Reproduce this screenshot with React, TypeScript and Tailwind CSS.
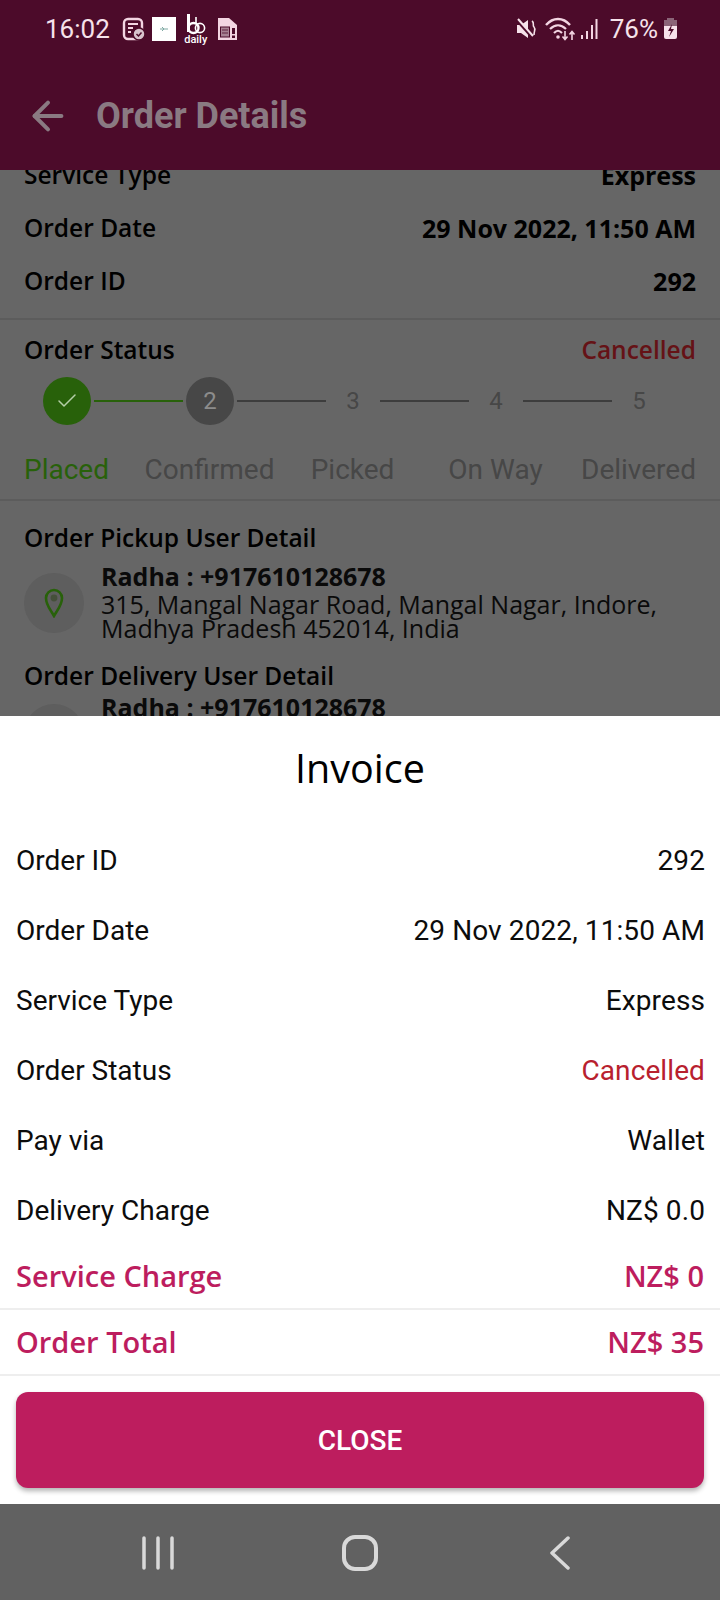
import { ArrowLeft, Check } from 'lucide-react'

const roboto = 'font-["Roboto",sans-serif]'
const openSans = 'font-["Open_Sans",sans-serif]'

const invoiceRows = [
  { label: 'Order ID', value: '292' },
  { label: 'Order Date', value: '29 Nov 2022, 11:50 AM' },
  { label: 'Service Type', value: 'Express' },
  { label: 'Order Status', value: 'Cancelled', danger: true },
  { label: 'Pay via', value: 'Wallet' },
  { label: 'Delivery Charge', value: 'NZ$ 0.0' },
]

const stepLabels = ['Placed', 'Confirmed', 'Picked', 'On Way', 'Delivered']

function StatusIcons() {
  return (
    <div className="flex items-center">
      {/* task note */}
      <svg width="24" height="24" viewBox="0 0 24 24" fill="none" className="ml-[12px]">
        <rect x="2" y="2" width="18" height="20" rx="4" stroke="#f3d5e2" strokeWidth="2.4" />
        <path d="M6 7h10M6 11h5M6 15h3" stroke="#f3d5e2" strokeWidth="2" />
        <circle cx="17" cy="17" r="6" fill="#d8c3cc" stroke="#4c0b2a" strokeWidth="1.5" />
        <path d="M14.5 17l2 2 3-3.5" stroke="#4c0b2a" strokeWidth="1.5" />
      </svg>
      {/* white square notification */}
      <div className="ml-[6px] flex h-6 w-6 items-center justify-center bg-white">
        <svg width="10" height="6" viewBox="0 0 10 6" fill="none">
          <path d="M1 3h8M3 1l2 2-2 2" stroke="#7ea9a3" strokeWidth="1" />
        </svg>
      </div>
      {/* bb daily */}
      <div className="ml-[8px] flex w-6 flex-col items-center">
        <svg width="21" height="22" viewBox="0 0 21 22" fill="none" stroke="#ffffff">
          <path d="M3.5 0v18" strokeWidth="3" />
          <circle cx="8.5" cy="14" r="5" strokeWidth="2.4" />
          <path d="M11 3v7" strokeWidth="1.6" />
          <circle cx="15" cy="14" r="4.6" strokeWidth="1.6" />
        </svg>
        <span className={`${roboto} -mt-[2px] text-[11px] leading-[11px] font-medium text-white`}>daily</span>
      </div>
      {/* sim */}
      <svg width="21" height="24" viewBox="0 0 21 24" fill="none" className="ml-[9px]">
        <path d="M1 1h11l8 7v15H1z" fill="#f3d5e2" />
        <rect x="3.5" y="10" width="9" height="10" fill="#a88294" stroke="#4c0b2a" strokeWidth="1" />
        <path d="M5 13h6M5 16h6" stroke="#4c0b2a" strokeWidth="0.8" />
        <rect x="15" y="11" width="3" height="6" fill="#4c0b2a" />
        <rect x="15" y="18.5" width="3" height="2.5" fill="#4c0b2a" />
      </svg>
    </div>
  )
}

function SystemIcons() {
  return (
    <div className="flex items-center">
      {/* muted speaker */}
      <svg width="22" height="22" viewBox="0 0 22 22" fill="none">
        <path d="M1 7h4l7-5v18l-7-5H1z" fill="#f6e2ea" />
        <path d="M1 2l15 17" stroke="#4c0b2a" strokeWidth="3" />
        <path d="M2 1l15 17" stroke="#f6e2ea" strokeWidth="2" />
        <path d="M16 3c3 2 0 4 2 6s0 4 0 8" stroke="#f6e2ea" strokeWidth="1.6" />
      </svg>
      {/* wifi with arrows */}
      <svg width="32" height="24" viewBox="0 0 32 24" fill="none" stroke="#f3d5e2" className="ml-[7px]">
        <path d="M1 8c7-8 17-8 24 0" strokeWidth="2.4" />
        <path d="M5 12c5-5 11-5 16 0" strokeWidth="2.2" />
        <path d="M9 16c3-3 5-3 8 0" strokeWidth="2.2" />
        <circle cx="13" cy="20" r="1.8" fill="#f3d5e2" stroke="none" />
        <path d="M20 14v8M17.5 19.5l2.5 3 2.5-3" strokeWidth="1.6" />
        <path d="M27 23v-8M24.5 17.5l2.5-3 2.5 3" strokeWidth="1.6" />
      </svg>
      {/* signal */}
      <svg width="18" height="22" viewBox="0 0 18 22" fill="#f3d5e2" className="ml-[3px]">
        <rect x="1" y="17" width="2" height="4" />
        <rect x="6" y="13" width="2" height="8" />
        <rect x="11" y="7" width="2" height="14" />
        <rect x="15.5" y="1" width="2" height="20" />
      </svg>
      <span className={`${roboto} ml-[12px] text-[26px] leading-[30px] text-[#f6e2ea]`}>76%</span>
      {/* charging battery */}
      <svg width="15" height="24" viewBox="0 0 15 24" fill="none" className="ml-[5px]">
        <rect x="4" y="1" width="7" height="3" fill="#8a6477" />
        <rect x="1" y="3" width="13" height="6" fill="#8a6477" />
        <path d="M1 9h13v11a2 2 0 0 1-2 2H3a2 2 0 0 1-2-2z" fill="#f6e2ea" />
        <path d="M9 7l-4 7h3l-2 6 5-8H8z" fill="#4c0b2a" />
      </svg>
    </div>
  )
}

function InfoRow({ label, value, danger }: { label: string; value: string; danger?: boolean }) {
  return (
    <div className="flex items-center justify-between">
      <span className={`${openSans} text-[24.5px] leading-[34px] font-semibold text-black`}>{label}</span>
      <span
        className={`${openSans} leading-[34px] ${danger ? 'text-[24.5px] font-semibold text-[#651216]' : 'text-[25px] font-bold text-black'}`}
      >
        {value}
      </span>
    </div>
  )
}

function Stepper() {
  return (
    <div className="ml-[43px] flex items-center">
      <div className="flex h-12 w-12 items-center justify-center rounded-full bg-[#28610a]">
        <Check size={24} strokeWidth={1.5} className="text-[#b5cfa8]" />
      </div>
      <div className="mx-[3px] h-[2px] w-[89px] bg-[#28610a]" />
      <div className={`${roboto} flex h-12 w-12 items-center justify-center rounded-full bg-[#474747] text-[24px] text-[#8c8c8c]`}>2</div>
      {['3', '4', '5'].map((n) => (
        <div key={n} className="flex items-center">
          <div className="mx-[3px] h-[2px] w-[89px] bg-[#3d3d3d]" />
          <div className={`${roboto} flex h-12 w-12 items-center justify-center text-[24px] text-[#474747]`}>{n}</div>
        </div>
      ))}
    </div>
  )
}

function UserDetail({ title, first }: { title: string; first?: boolean }) {
  return (
    <div>
      <div className={`${openSans} text-[24.5px] leading-[34px] font-semibold text-black ${first ? 'mb-[5px]' : '-mb-[2px]'}`}>{title}</div>
      <div className="flex items-center gap-[17px]">
        <div className="mt-[6px] flex h-[60px] w-[60px] shrink-0 items-center justify-center rounded-full bg-[#5e5e5e]">
          <svg width="22" height="30" viewBox="0 0 20 30" fill="none" stroke="#28610a" strokeWidth="2.6">
            <path d="M10 28C6 21 2 17 2 10a8 8 0 0 1 16 0c0 7-4 11-8 18z" />
            <circle cx="10" cy="10" r="3.4" fill="#45503a" stroke="none" />
          </svg>
        </div>
        <div>
          <div className={`${openSans} text-[25px] leading-[32px] font-bold text-[#0a0a0a]`}>Radha : +917610128678</div>
          <div className={`${openSans} text-[25px] leading-[24px] text-[#0a0a0a]`}>
            315, Mangal Nagar Road, Mangal Nagar, Indore,
            <br />
            Madhya Pradesh 452014, India
          </div>
        </div>
      </div>
    </div>
  )
}

export default function App() {
  return (
    <div className="flex h-[1600px] w-[720px] flex-col overflow-hidden bg-[#666666]">
      <header className="h-[170px] shrink-0 bg-[#4c0b2a]">
        <div className="flex h-[58px] items-center justify-between pr-[42px] pl-[45px]">
          <div className="flex items-center">
            <span className={`${roboto} text-[26px] leading-[30px] text-[#f6e2ea]`}>16:02</span>
            <StatusIcons />
          </div>
          <SystemIcons />
        </div>
        <div className="mt-[35px] flex items-center pl-[25px]">
          <ArrowLeft size={46} strokeWidth={2.1} className="text-[#8a7a82]" />
          <span className={`${roboto} ml-[25px] text-[36px] leading-[46px] font-bold text-[#8a7a82]`}>Order Details</span>
        </div>
      </header>

      {/* page behind the dim, scrolled a little */}
      <main className="h-[546px] shrink-0 overflow-hidden">
        <div className="-mt-[12px] px-[24px]">
          <div className="flex flex-col gap-[19px]">
            <InfoRow label="Service Type" value="Express" />
            <InfoRow label="Order Date" value="29 Nov 2022, 11:50 AM" />
            <InfoRow label="Order ID" value="292" />
          </div>
        </div>
        <div className="mt-[20px] border-t-2 border-[#5c5c5c] pt-[13px]">
          <div className="px-[24px]">
            <InfoRow label="Order Status" value="Cancelled" danger />
          </div>
          <div className="mt-[10px]">
            <Stepper />
          </div>
          <div className={`-ml-[5px] mt-[27px] grid w-[715px] grid-cols-5 text-center ${roboto} text-[28px] leading-[36px] text-[#474747]`}>
            {stepLabels.map((label, i) => (
              <span key={label} className={i === 0 ? 'text-[#28610a]' : ''}>
                {label}
              </span>
            ))}
          </div>
        </div>
        <div className="mt-[11px] flex flex-col gap-[19px] border-t-2 border-[#5c5c5c] px-[24px] pt-[20px]">
          <UserDetail title="Order Pickup User Detail" first />
          <UserDetail title="Order Delivery User Detail" />
        </div>
      </main>

      {/* invoice sheet */}
      <section className="h-[788px] shrink-0 bg-white">
        <h2 className={`${openSans} pt-[26px] text-center text-[39.5px] leading-[52px] font-medium text-black`}>Invoice</h2>
        <div className="mt-[32px] flex flex-col pr-[15px] pl-4">
          {invoiceRows.map((row) => (
            <div key={row.label} className={`${roboto} flex h-[70px] items-center justify-between text-[28px] text-[#0c0c0c]`}>
              <span>{row.label}</span>
              <span className={`tracking-[0.1px] ${row.danger ? 'text-[#b8202e]' : ''}`}>{row.value}</span>
            </div>
          ))}
        </div>
        <div className={`${openSans} text-[29px] font-semibold text-[#bd1d5e]`}>
          <div className="flex h-[64px] items-center justify-between border-b-2 border-[#eeeeee] px-4 pb-[3px]">
            <span>Service Charge</span>
            <span>NZ$ 0</span>
          </div>
          <div className="flex h-[66px] items-center justify-between border-b-2 border-[#eeeeee] px-4">
            <span>Order Total</span>
            <span>NZ$ 35</span>
          </div>
        </div>
        <div className="px-4 pt-[16px]">
          <button
            type="button"
            className={`${roboto} h-[96px] w-full rounded-[12px] bg-[#bd1d5e] pt-[2px] text-[28px] font-medium text-white shadow-[0_3px_5px_rgba(0,0,0,0.3)]`}
          >
            CLOSE
          </button>
        </div>
      </section>

      <nav className="grid h-[96px] shrink-0 grid-cols-3 items-center bg-[#616161] px-[60px] pt-[1px]">
        <svg width="34" height="36" viewBox="0 0 34 36" fill="none" stroke="#d9d9d9" strokeWidth="3.5" strokeLinecap="round" className="mr-[4px] justify-self-center">
          <path d="M3 3v30M17 3v30M31 3v30" />
        </svg>
        <svg width="36" height="36" viewBox="0 0 36 36" fill="none" stroke="#d9d9d9" strokeWidth="4" className="justify-self-center">
          <rect x="2" y="2" width="32" height="32" rx="11" />
        </svg>
        <svg width="22" height="34" viewBox="0 0 22 34" fill="none" stroke="#d9d9d9" strokeWidth="3.5" strokeLinecap="round" strokeLinejoin="round" className="justify-self-center">
          <path d="M19 2L3 17l16 15" />
        </svg>
      </nav>
    </div>
  )
}
